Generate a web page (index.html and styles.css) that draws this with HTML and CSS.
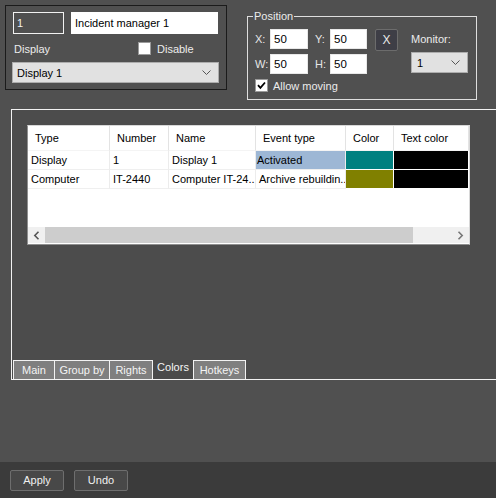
FILE: index.html
```html
<!DOCTYPE html>
<html>
<head>
<meta charset="utf-8">
<link rel="stylesheet" href="styles.css">
</head>
<body>
<div class="app">
  <div class="top">
    <div class="idbox">
      <div class="idrow">
        <div class="field field-dark">1</div>
        <div class="field field-name">Incident manager 1</div>
      </div>
      <div class="idrow2">
        <span class="lbl-display">Display</span>
        <span class="chk"><span class="box"></span>Disable</span>
      </div>
      <div class="select select-display">
        <span>Display 1</span>
        <svg class="chev" width="9" height="6" viewBox="0 0 9 6"><path d="M0.5 0.5 L4.5 4.5 L8.5 0.5" fill="none" stroke="#555" stroke-width="1"/></svg>
      </div>
    </div>
    <div class="pos">
      <span class="legend">Position</span>
      <div class="pos-main">
        <div class="pos-fields">
          <span class="plbl">X:</span><div class="inp">50</div>
          <span class="plbl plbl-gap">Y:</span><div class="inp">50</div>
          <span class="plbl">W:</span><div class="inp">50</div>
          <span class="plbl plbl-gap">H:</span><div class="inp">50</div>
        </div>
        <div class="xbtn">X</div>
        <div class="monitor">
          <span class="mon-lbl">Monitor:</span>
          <div class="select select-mon">
            <span>1</span>
            <svg class="chev" width="9" height="6" viewBox="0 0 9 6"><path d="M0.5 0.5 L4.5 4.5 L8.5 0.5" fill="none" stroke="#555" stroke-width="1"/></svg>
          </div>
        </div>
      </div>
      <div class="chk chk-move">
        <span class="box box-checked"><svg width="9" height="9" viewBox="0 0 9 9"><path d="M1 4.2 L3.4 6.8 L8 1.5" fill="none" stroke="#000" stroke-width="1.8"/></svg></span>Allow moving
      </div>
    </div>
  </div>

  <div class="panel">
    <div class="grid">
      <div class="gtable">
        <div class="c h">Type</div><div class="c h">Number</div><div class="c h">Name</div><div class="c h">Event type</div><div class="c h">Color</div><div class="c h">Text color</div>
        <div class="c">Display</div><div class="c">1</div><div class="c">Display 1</div><div class="c sel">Activated</div><div class="c sw teal"></div><div class="c sw black"></div>
        <div class="c">Computer</div><div class="c">IT-2440</div><div class="c">Computer IT-24..</div><div class="c">Archive rebuildin..</div><div class="c sw olive"></div><div class="c sw black"></div>
      </div>
      <div class="gfill"></div>
      <div class="hscroll">
        <div class="arrow"><svg width="7" height="9" viewBox="0 0 7 9"><path d="M5.5 0.8 L1.8 4.5 L5.5 8.2" fill="none" stroke="#555" stroke-width="1.6"/></svg></div>
        <div class="thumb"></div>
        <div class="track"></div>
        <div class="arrow"><svg width="7" height="9" viewBox="0 0 7 9"><path d="M1.5 0.8 L5.2 4.5 L1.5 8.2" fill="none" stroke="#777" stroke-width="1.6"/></svg></div>
      </div>
    </div>
    <div class="tabs">
      <div class="tab t-main">Main</div>
      <div class="tab t-group">Group by</div>
      <div class="tab t-rights">Rights</div>
      <div class="tab t-colors active">Colors</div>
      <div class="tab t-hot">Hotkeys</div>
    </div>
  </div>

  <div class="spacer"></div>

  <div class="bottom">
    <div class="btn">Apply</div>
    <div class="btn">Undo</div>
  </div>
</div>
</body>
</html>
```

FILE: styles.css
```css
* { box-sizing: border-box; }
html, body { margin: 0; padding: 0; }
body {
  width: 496px;
  height: 498px;
  overflow: hidden;
  background: #505050;
  font-family: "Liberation Sans", Arial, sans-serif;
  font-size: 11px;
  color: #ececec;
}
.app {
  display: flex;
  flex-direction: column;
  height: 498px;
}
.top {
  display: flex;
  height: 109px;
  flex: none;
}

/* identity box */
.idbox {
  margin: 5px 0 0 5px;
  width: 222px;
  height: 85px;
  border: 1px solid #1b1b1b;
  padding: 6px 0 0 7px;
}
.idrow { display: flex; gap: 7px; height: 22px; }
.field {
  height: 22px;
  line-height: 20px;
  padding-left: 3px;
  font-size: 11px;
}
.field-dark { width: 51px; border: 1px solid #f2f2f2; color: #f2f2f2; }
.field-name { width: 147px; background: #fff; color: #000; border: 1px solid #fff; }
.idrow2 {
  display: flex;
  align-items: center;
  height: 28px;
  padding-top: 1px;
}
.lbl-display { width: 125px; padding-left: 1px; }
.chk { display: flex; align-items: center; gap: 6px; }
.box {
  width: 13px;
  height: 13px;
  background: #fff;
  border: 1px solid #9a9a9a;
  display: flex;
  align-items: center;
  justify-content: center;
}
.select {
  display: flex;
  align-items: center;
  justify-content: space-between;
  background: #e1e1e1;
  border: 1px solid #adadad;
  color: #000;
  padding: 0 7px 0 4px;
}
.select-display {
  width: 207px;
  height: 21px;
  margin-left: -1px;
}

/* position */
.pos {
  position: relative;
  margin: 16px 0 0 20px;
  width: 230px;
  height: 84px;
  border: 1px solid #dedede;
  padding: 12px 0 0 7px;
}
.legend {
  position: absolute;
  top: -8px;
  left: 5px;
  padding: 0 1px;
  background: #505050;
  line-height: 14px;
}
.pos-main { display: flex; align-items: flex-start; }
.pos-fields {
  display: grid;
  grid-template-columns: 15px 38px 22px 37px;
  grid-template-rows: 20px 20px;
  row-gap: 5px;
  align-items: center;
}
.plbl { color: #e6e6e6; }
.plbl-gap { padding-left: 7px; }
.inp {
  height: 20px;
  background: #fff;
  color: #000;
  border: 1px solid #e8e8e8;
  line-height: 18px;
  padding-left: 3px;
  font-size: 11.5px;
}
.xbtn {
  margin-left: 8px;
  width: 23px;
  height: 22px;
  background: #3e3e46;
  border: 1px solid #6c6c6c;
  border-radius: 2px;
  color: #e8e8e8;
  font-size: 12px;
  line-height: 20px;
  text-align: center;
}
.monitor {
  margin-left: 13px;
  display: flex;
  flex-direction: column;
}
.mon-lbl { margin-top: 3px; line-height: 14px; }
.select-mon {
  margin-top: 6px;
  width: 57px;
  height: 21px;
  padding-left: 5px;
}
.chk-move { margin-top: 5px; gap: 5px; }
.box-checked { width: 13px; height: 13px; }

/* panel */
.panel {
  flex: none;
  height: 271px;
  margin-left: 11px;
  border-left: 1px solid #f2f2f2;
  border-top: 1px solid #f2f2f2;
  border-bottom: 1px solid #f2f2f2;
  padding: 15px 0 0 15px;
  display: flex;
  flex-direction: column;
  background: #4c4c4c;
}
.grid {
  width: 443px;
  height: 120px;
  background: #fff;
  border: 1px solid #8f8f8f;
  border-top-color: #d8d8d8;
  border-right-color: #d8d8d8;
  display: flex;
  flex-direction: column;
  color: #000;
}
.gtable {
  display: grid;
  grid-template-columns: 82px 59px 87px 90px 48px 75px;
  grid-template-rows: 25px 19px 19px;
}
.c {
  border-right: 1px solid #ececec;
  border-bottom: 1px solid #efefef;
  padding-left: 3px;
  line-height: 18px;
  white-space: nowrap;
  overflow: hidden;
}
.c.h { padding-left: 7px; line-height: 24px; border-right-color: #e3e3e3; border-bottom-color: #f4f4f4; }
.c.sel { background: #9db7d5; padding-left: 1px; }
.c.sw { border-right-color: #fff; border-bottom-color: #fff; }
.teal { background: #008080; }
.olive { background: #808000; }
.black { background: #000; }
.gfill { flex: 1; }
.hscroll {
  display: flex;
  height: 16px;
  background: #f0f0f0;
  margin-bottom: 1px;
}
.arrow {
  width: 17px;
  display: flex;
  align-items: center;
  justify-content: center;
}
.thumb { width: 368px; background: #cdcdcd; }
.track { flex: 1; }

.tabs {
  margin-top: auto;
  margin-left: -14px;
  display: flex;
  height: 19px;
}
.tab {
  height: 19px;
  background: #7f7f7f;
  border-left: 1px solid #f2f2f2;
  border-top: 1px solid #f2f2f2;
  color: #f4f4f4;
  text-align: center;
  line-height: 18px;
  font-size: 11px;
}
.t-main { width: 41px; }
.t-group { width: 55px; }
.t-rights { width: 43px; }
.t-colors { width: 41px; }
.t-hot { width: 53px; border-right: 1px solid #f2f2f2; }
.tab.active {
  background: #4a4a4a;
  border-top: none;
  line-height: 15px;
}

.spacer { flex: 1; }
.bottom {
  flex: none;
  height: 36px;
  background: #3b3b3b;
  display: flex;
  gap: 10px;
  padding: 8px 0 0 10px;
}
.btn {
  width: 54px;
  height: 21px;
  background: #484848;
  border: 1px solid #6e6e6e;
  border-radius: 2px;
  color: #f0f0f0;
  text-align: center;
  line-height: 19px;
  font-size: 11px;
}
```
